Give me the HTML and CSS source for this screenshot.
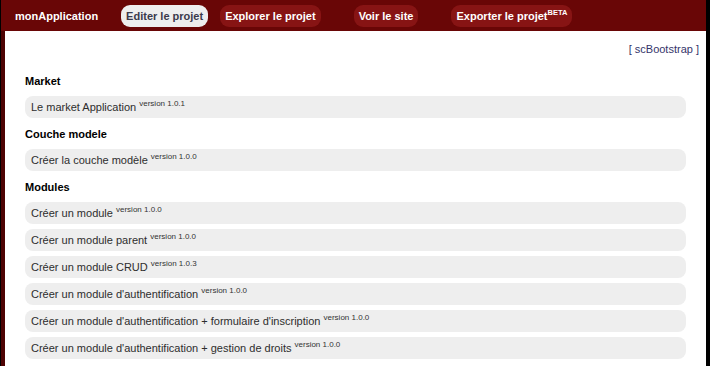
FILE: index.html
```html
<!DOCTYPE html>
<html lang="fr">
<head>
<meta charset="utf-8">
<title>monApplication</title>
<link rel="stylesheet" href="styles.css">
</head>
<body>
<div class="frame">
  <header class="topbar">
    <span class="brand">monApplication</span>
    <nav class="nav">
      <a class="pill pill-active">Editer le projet</a>
      <a class="pill">Explorer le projet</a>
      <a class="pill pill-far">Voir le site</a>
      <a class="pill pill-far">Exporter le projet<sup class="beta">BETA</sup></a>
    </nav>
  </header>
  <main class="content">
    <div class="toolbar"><a class="lib-link">[ scBootstrap ]</a></div>
    <section class="group">
      <h3 class="group-title">Market</h3>
      <ul class="list">
        <li class="item">Le market Application <sup class="version">version 1.0.1</sup></li>
      </ul>
    </section>
    <section class="group">
      <h3 class="group-title">Couche modele</h3>
      <ul class="list">
        <li class="item">Créer la couche modèle <sup class="version">version 1.0.0</sup></li>
      </ul>
    </section>
    <section class="group">
      <h3 class="group-title">Modules</h3>
      <ul class="list">
        <li class="item">Créer un module <sup class="version">version 1.0.0</sup></li>
        <li class="item">Créer un module parent <sup class="version">version 1.0.0</sup></li>
        <li class="item">Créer un module CRUD <sup class="version">version 1.0.3</sup></li>
        <li class="item">Créer un module d'authentification <sup class="version">version 1.0.0</sup></li>
        <li class="item">Créer un module d'authentification + formulaire d'inscription <sup class="version">version 1.0.0</sup></li>
        <li class="item">Créer un module d'authentification + gestion de droits <sup class="version">version 1.0.0</sup></li>
      </ul>
    </section>
  </main>
</div>
</body>
</html>
```
FILE: styles.css
```css
html, body {
  margin: 0;
  padding: 0;
  background: #000;
}
body {
  font-family: "Liberation Sans", Arial, sans-serif;
  font-size: 11px;
}
.frame {
  margin-left: 1px;
  width: 705px;
  min-height: 366px;
  background: #4e0303;
}
.topbar {
  height: 31px;
  box-sizing: border-box;
  padding: 5px 0 0 14px;
  background: #690606;
  display: flex;
  align-items: flex-start;
}
.brand {
  color: #fff;
  font-weight: bold;
  line-height: 22px;
  margin-right: 23px;
}
.nav {
  display: flex;
  gap: 12px;
}
.pill {
  display: block;
  height: 22px;
  line-height: 22px;
  padding: 0 5px;
  border-radius: 9px;
  background: #871414;
  color: #fff;
  font-weight: bold;
  white-space: nowrap;
}
.pill-active {
  background: #eeeeee;
  color: #3a3a4c;
}
.pill-far {
  margin-left: 21px;
}
.beta {
  font-size: 7.5px;
  line-height: 0;
  vertical-align: super;
}
.content {
  margin-left: 4px;
  background: #fff;
  padding: 12px 0 10px;
  min-height: 335px;
  box-sizing: border-box;
}
.toolbar {
  text-align: right;
  padding-right: 7px;
  line-height: 13px;
  margin-bottom: 14px;
}
.lib-link {
  color: #34346a;
}
.group-title {
  margin: 0;
  padding: 5px 0 8px 20px;
  font-size: 11px;
  line-height: 13px;
  color: #000;
}
.list {
  list-style: none;
  margin: 0 20px;
  padding: 0;
}
.item {
  height: 22px;
  box-sizing: border-box;
  padding: 1px 6px 0;
  line-height: 21px;
  background: #eeeeee;
  border-radius: 8px;
  margin-bottom: 5px;
  color: #2d2d2d;
  white-space: nowrap;
}
.version {
  font-size: 8px;
  line-height: 0;
  vertical-align: super;
  color: #333;
}
```
